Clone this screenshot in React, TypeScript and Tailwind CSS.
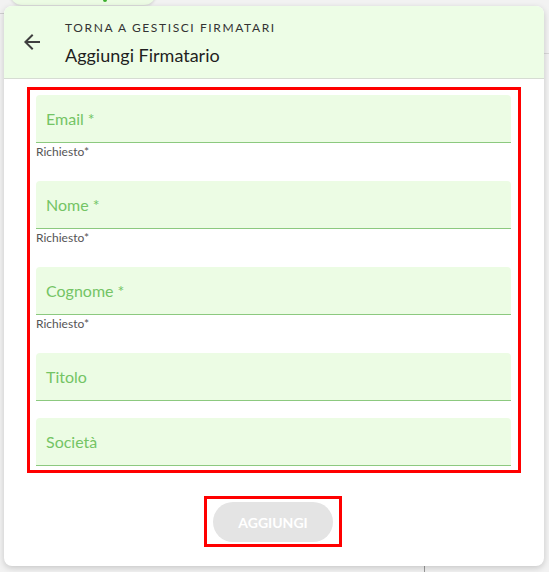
import React from "react";

const fields = [
  { label: "Email *", helper: true },
  { label: "Nome *", helper: true },
  { label: "Cognome *", helper: true },
  { label: "Titolo", helper: false },
  { label: "Società", helper: false },
];

export default function App() {
  return (
    <div
      className="relative w-[549px] h-[572px] overflow-hidden bg-[#f2f2f2]"
      style={{ fontFamily: 'Lato, "Noto Sans", Arial, sans-serif' }}
    >
      {/* background pill peeking from behind */}
      <div className="absolute left-[10px] top-[-20px] w-[146px] h-[25px] rounded-[12px] bg-[#ecfbe4] shadow-[0_1px_3px_rgba(0,0,0,0.15)]">
        <div className="absolute left-[93px] top-[18px] w-[4px] h-[4px] rounded-full bg-[#3cae2e]" />
      </div>
      <div className="absolute left-0 top-[13px] w-[4px] h-px bg-[#cfcfcf]" />
      <div className="absolute right-0 top-[53px] w-[5px] h-px bg-[#d8d8d8]" />
      <div className="absolute left-[424px] top-[566px] w-px h-[6px] bg-[#9a9a9a]" />

      <div className="pl-[4px] pt-[6px]">
        <div className="relative w-[540px] h-[560px] bg-white rounded-[8px] shadow-[0_2px_6px_rgba(0,0,0,0.18)] overflow-hidden flex flex-col">
          {/* header */}
          <div className="h-[73px] bg-[#edfde6] border-b border-[#d6dcd3] flex items-center">
            <div className="w-[61px] flex items-center pl-[16px]">
              <svg width="24" height="24" viewBox="0 0 24 24">
                <path
                  d="M20 11H7.83l5.59-5.59L12 4l-8 8 8 8 1.41-1.41L7.83 13H20v-2z"
                  fill="#3f3f3f"
                />
              </svg>
            </div>
            <div className="flex flex-col pt-[1px]">
              <div className="text-[12px] leading-[16px] tracking-[1.6px] text-[#333]">
                TORNA A GESTISCI FIRMATARI
              </div>
              <div className="mt-[8px] text-[18px] leading-[22px] text-[#1f1f1f]">
                Aggiungi Firmatario
              </div>
            </div>
          </div>

          {/* form */}
          <div className="mt-[8px] mx-[23px] border-[3px] border-[#ff0000] pt-[5px] pb-[4px] pl-[6px] pr-[7px]">
            {fields.map((f, i) => (
              <div key={i} className={i < fields.length - 1 ? "mb-[17px]" : ""}>
                <div className="h-[48px] bg-[#ecfce4] rounded-t-[4px] border-b border-[#8cc97f] flex items-center pl-[10px] pt-[1px]">
                  <span className="text-[16px] text-[#74c465]">{f.label}</span>
                </div>
                {f.helper && (
                  <div className="h-[21px] text-[12px] leading-[16px] text-[#555] pt-[1px]">
                    Richiesto*
                  </div>
                )}
              </div>
            ))}
          </div>

          {/* button */}
          <div className="mt-[23px] flex justify-center pr-[2px]">
            <div className="border-[3px] border-[#ff0000] pl-[6px] pr-[6px] pt-[3px] pb-[2px]">
              <button className="w-[120px] h-[40px] rounded-full bg-[#e4e4e4] text-white text-[14px] font-bold">
                AGGIUNGI
              </button>
            </div>
          </div>
        </div>
      </div>
    </div>
  );
}
